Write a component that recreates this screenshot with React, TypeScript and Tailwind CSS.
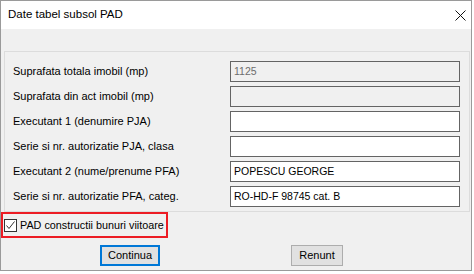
import React from 'react';

const rows = [
  { label: 'Suprafata totala imobil (mp)', value: '1125', disabled: true },
  { label: 'Suprafata din act imobil (mp)', value: '', disabled: true },
  { label: 'Executant 1 (denumire PJA)', value: '', disabled: false },
  { label: 'Serie si nr. autorizatie PJA, clasa', value: '', disabled: false },
  { label: 'Executant 2 (nume/prenume PFA)', value: 'POPESCU GEORGE', disabled: false },
  { label: 'Serie si nr. autorizatie PFA, categ.', value: 'RO-HD-F 98745 cat. B', disabled: false },
];

const App: React.FC = () => {
  return (
    <div className="w-[474px] h-[274px] bg-white font-['Liberation_Sans',Arial,sans-serif] text-black">
      <div className="w-[472px] h-[271px] border border-[#9a9a9a] bg-[#f0f0f0] flex flex-col">
        <div className="h-[28px] bg-white flex items-center justify-between pl-[7px] pr-[5px]">
          <span className="text-[11.5px]">Date tabel subsol PAD</span>
          <svg width="11" height="11" viewBox="0 0 11 11" className="block">
            <path d="M0.5 0.5 L10.5 10.5 M10.5 0.5 L0.5 10.5" stroke="#111" strokeWidth="1" />
          </svg>
        </div>

        <div className="mt-[22px] ml-[3px] w-[466px] h-[161px] border border-[#dcdcdc] pt-[9px] pl-[8px] flex flex-col gap-[4px]">
          {rows.map((r) => (
            <div key={r.label} className="flex items-center h-[21px]">
              <span className="w-[217px] text-[11px] leading-none whitespace-nowrap">{r.label}</span>
              <div
                className={`w-[230px] h-[21px] border border-[#646464] flex items-center pl-[3px] text-[10.5px] whitespace-nowrap ${
                  r.disabled ? 'bg-[#f0f0f0] text-[#6d6d6d]' : 'bg-white text-black'
                }`}
              >
                {r.value}
              </div>
            </div>
          ))}
        </div>

        <div className="w-[167px] h-[26px] border-2 border-[#ec1c24] flex items-center pl-[1px] gap-[3px]">
          <div className="shrink-0 w-[13px] h-[13px] border border-[#333] bg-white flex items-center justify-center">
            <svg width="11" height="11" viewBox="0 0 11 11" className="block">
              <path d="M1.5 5.5 L4 8.5 L9.5 1.5" fill="none" stroke="#333" strokeWidth="1" />
            </svg>
          </div>
          <span className="text-[10.8px] leading-none whitespace-nowrap">PAD constructii bunuri viitoare</span>
        </div>

        <div className="flex mt-[7px]">
          <button className="ml-[99px] w-[60px] h-[21px] border-2 border-[#0078d7] bg-[#e1e1e1] text-[11px] leading-none flex items-center justify-center">
            Continua
          </button>
          <button className="ml-[131px] w-[52px] h-[21px] border border-[#adadad] bg-[#e1e1e1] text-[11px] leading-none flex items-center justify-center">
            Renunt
          </button>
        </div>
      </div>
    </div>
  );
};

export default App;
